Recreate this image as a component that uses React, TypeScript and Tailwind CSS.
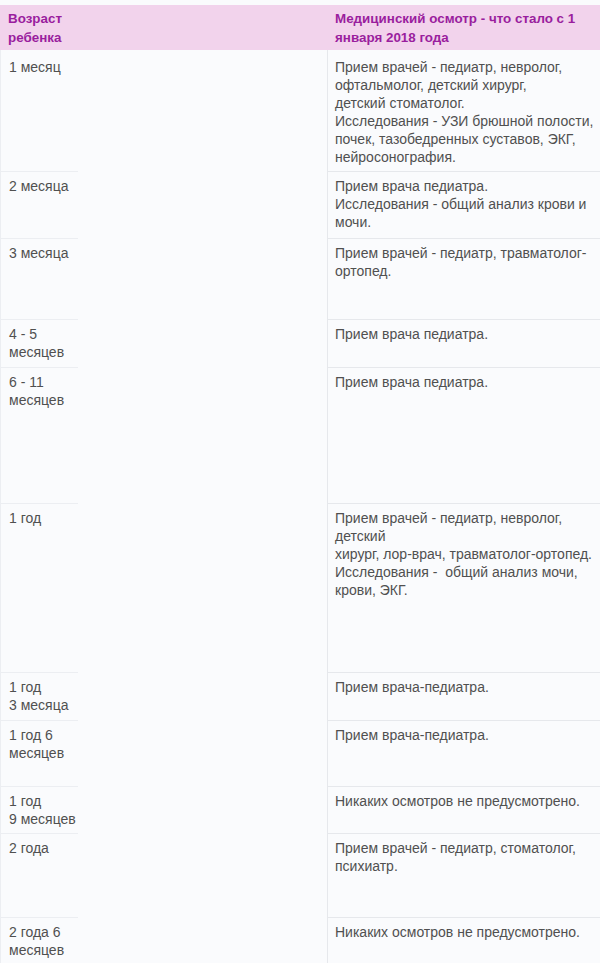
import React from "react";

const rows: { age: string[]; text: string[]; h: string }[] = [
  {
    age: ["1 месяц"],
    text: [
      "Прием врачей - педиатр, невролог,",
      "офтальмолог, детский хирург,",
      "детский стоматолог.",
      "Исследования - УЗИ брюшной полости,",
      "почек, тазобедренных суставов, ЭКГ,",
      "нейросонография.",
    ],
    h: "h-[121px]",
  },
  {
    age: ["2 месяца"],
    text: ["Прием врача педиатра.", "Исследования - общий анализ крови и", "мочи."],
    h: "h-[67px]",
  },
  { age: ["3 месяца"], text: ["Прием врачей - педиатр, травматолог-", "ортопед."], h: "h-[81px]" },
  { age: ["4 - 5", "месяцев"], text: ["Прием врача педиатра."], h: "h-[48px]" },
  { age: ["6 - 11", "месяцев"], text: ["Прием врача педиатра."], h: "h-[136px]" },
  {
    age: ["1 год"],
    text: [
      "Прием врачей - педиатр, невролог,",
      "детский",
      "хирург, лор-врач, травматолог-ортопед.",
      "Исследования -  общий анализ мочи,",
      "крови, ЭКГ.",
    ],
    h: "h-[169px]",
  },
  { age: ["1 год", "3 месяца"], text: ["Прием врача-педиатра."], h: "h-[48px]" },
  { age: ["1 год 6", "месяцев"], text: ["Прием врача-педиатра."], h: "h-[66px]" },
  { age: ["1 год", "9 месяцев"], text: ["Никаких осмотров не предусмотрено."], h: "h-[47px]" },
  { age: ["2 года"], text: ["Прием врачей - педиатр, стоматолог,", "психиатр."], h: "h-[84px]" },
  { age: ["2 года 6", "месяцев"], text: ["Никаких осмотров не предусмотрено."], h: "h-[60px]" },
];

export default function App() {
  return (
    <div
      className="w-[600px] h-[963px] overflow-hidden bg-[#fafbfd] pt-[5px]"
      style={{ fontFamily: '"Liberation Sans", Arial, sans-serif' }}
    >
      <div className="grid grid-cols-[78px_1fr_273px] h-[45px] bg-[#f2d3ec] text-[#9a1e9e] font-bold text-[13.4px] leading-[19px]">
        <div className="pl-[8px] pt-[4px] whitespace-pre-line">{"Возраст\nребенка"}</div>
        <div />
        <div className="pl-[8px] pt-[4px] whitespace-pre-line">{"Медицинский осмотр - что стало с 1\nянваря 2018 года"}</div>
      </div>
      {rows.map((r, i) => (
        <div key={i} className={`grid grid-cols-[78px_1fr_273px] ${r.h} text-[14px] leading-[18px] text-[#505050]`}>
          <div className={`pl-[8px] ${i === 0 ? "pt-[8px]" : "pt-[5px] border-t"} border-l border-[#eceef2]`}>
            {r.age.map((a, j) => (
              <div key={j} className="whitespace-nowrap">{a}</div>
            ))}
          </div>
          <div />
          <div className={`pl-[7px] ${i === 0 ? "pt-[8px]" : "pt-[5px] border-t"} border-l border-[#e6e8ec]`}>
            {r.text.map((t, j) => (
              <div key={j} className="whitespace-pre">{t}</div>
            ))}
          </div>
        </div>
      ))}
    </div>
  );
}
